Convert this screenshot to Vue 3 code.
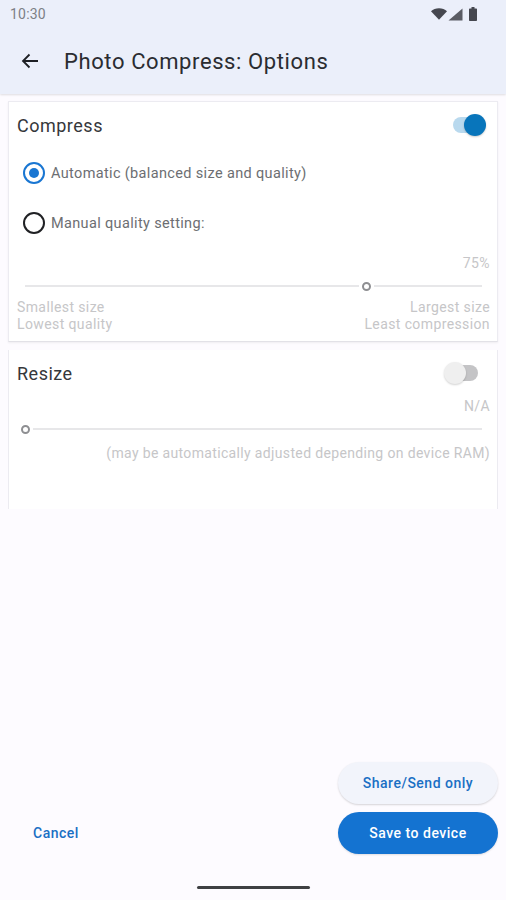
<template>
  <div class="screen">
    <div class="topbar">
      <div class="status">
        <span class="time">10:30</span>
        <div class="status-icons">
          <svg width="16" height="12" viewBox="0 0 16 12"><path d="M0 3.200C2 1.300 4.800 0.200 8 0.200s6 1.100 8 3L8 11.800z" fill="#45474f" /></svg>
          <svg width="15" height="13" viewBox="0 0 15 13"><path d="M14.500 0.500V12.500H0.500z" fill="#5a5c64" /></svg>
          <svg width="8" height="14" viewBox="0 0 8 14"><path d="M2.500 0h3v1.400h1.500c.6 0 1 .4 1 1V13c0 .6-.4 1-1 1H1c-.6 0-1-.4-1-1V2.400c0-.6.4-1 1-1h1.500z" fill="#45474f" /></svg>
        </div>
      </div>
      <div class="toolbar">
        <svg class="back" width="20" height="20" viewBox="0 0 20 20"><path d="M18 10H3M9.500 3.500 3 10l6.500 6.500" fill="none" stroke="#1d1f24" stroke-width="1.800" /></svg>
        <h1>Photo Compress: Options</h1>
      </div>
    </div>

    <section class="card first">
      <div class="card-head">
        <h2>Compress</h2>
        <div class="switch on"><span class="track"></span><span class="knob"></span></div>
      </div>
      <div class="radio-row first-radio">
        <span class="radio checked"><span class="dot"></span></span>
        <span>Automatic (balanced size and quality)</span>
      </div>
      <div class="radio-row second-radio">
        <span class="radio"></span>
        <span>Manual quality setting:</span>
      </div>
      <div class="value pct">{{ quality }}%</div>
      <div class="slider first-slider">
        <span class="line" :style="{ flexGrow: thumbPos }"></span>
        <span class="thumb"></span>
        <span class="line" :style="{ flexGrow: 100 - thumbPos }"></span>
      </div>
      <div class="legend">
        <div>Smallest size<br />Lowest quality</div>
        <div class="right">Largest size<br />Least compression</div>
      </div>
    </section>

    <section class="card second">
      <div class="card-head">
        <h2>Resize</h2>
        <div class="switch off"><span class="track"></span><span class="knob"></span></div>
      </div>
      <div class="value na">N/A</div>
      <div class="slider start">
        <span class="thumb"></span>
        <span class="line grow"></span>
      </div>
      <div class="note">(may be automatically adjusted depending on device RAM)</div>
    </section>

    <div class="actions">
      <button class="text-btn">Cancel</button>
      <div class="action-stack">
        <button class="pill light">Share/Send only</button>
        <button class="pill solid">Save to device</button>
      </div>
    </div>
    <div class="home-wrap"><span class="home"></span></div>
  </div>
</template>

<script setup>
const quality = 75
const thumbPos = 75.5
</script>

<style>
html,
body {
  margin: 0;
  background: #fdfbff;
}
</style>

<style scoped>
.screen {
  width: 506px;
  height: 900px;
  display: flex;
  flex-direction: column;
  background: #fdfbff;
  font-family: Roboto, "Liberation Sans", sans-serif;
  overflow: hidden;
}

.topbar {
  height: 94px;
  background: #ebeffa;
  box-shadow: 0 1px 2px rgba(0, 0, 0, 0.12);
}

.status {
  height: 28px;
  padding: 0 29px 0 10px;
  display: flex;
  justify-content: space-between;
  align-items: center;
}

.time {
  font-size: 14px;
  letter-spacing: 0.2px;
  color: #7d8086;
}

.status-icons {
  display: flex;
  align-items: center;
  gap: 1px;
}

.status-icons svg:last-child {
  margin-left: 5px;
}

.toolbar {
  height: 66px;
  padding-left: 20px;
  display: flex;
  align-items: center;
  gap: 24px;
}

.back {
  flex: none;
}

h1 {
  margin: 0;
  font-size: 22px;
  font-weight: 400;
  letter-spacing: 0.6px;
  color: #2a2c31;
}

.card {
  margin: 0 8px;
  padding: 0 7px 0 8px;
  background: #fff;
  border: 1px solid #ecebf1;
  box-sizing: border-box;
}

.first {
  margin-top: 7px;
  height: 241px;
  border-bottom-color: #e2e1e7;
  box-shadow: 0 1px 2px rgba(0, 0, 0, 0.06);
}

.second {
  margin-top: 8px;
  height: 159px;
  border-top: none;
  border-bottom: none;
}

.card-head {
  display: flex;
  justify-content: space-between;
  align-items: center;
  height: 46px;
}

h2 {
  margin: 0;
  font-size: 18px;
  font-weight: 400;
  letter-spacing: 0.5px;
  color: #35373b;
}

.switch {
  position: relative;
  width: 34px;
  height: 22px;
}

.on {
  margin-right: 4px;
}

.off {
  width: 35px;
  margin-right: 11px;
}

.track {
  position: absolute;
  left: 1px;
  right: 1px;
  top: 3px;
  height: 16px;
  border-radius: 8px;
}

.on .track {
  background: #b9d9ee;
}

.off .track {
  background: #c4c4c6;
}

.knob {
  position: absolute;
  top: 0;
  width: 22px;
  height: 22px;
  border-radius: 50%;
}

.on .knob {
  right: 0;
  background: #0875bb;
  box-shadow: 0 1px 2px rgba(0, 0, 0, 0.2);
}

.off .knob {
  left: 0;
  background: #efefef;
  box-shadow: 0 1px 2px rgba(0, 0, 0, 0.18);
}

.radio-row {
  display: flex;
  align-items: center;
  gap: 6px;
  padding-left: 6px;
  font-size: 14.5px;
  letter-spacing: 0.35px;
  color: #6c6e72;
}

.first-radio {
  margin-top: 14px;
}

.second-radio {
  margin-top: 28px;
}

.radio {
  width: 22px;
  height: 22px;
  box-sizing: border-box;
  border: 2px solid #202124;
  border-radius: 50%;
  display: flex;
  align-items: center;
  justify-content: center;
  flex: none;
}

.radio.checked {
  border-color: #1976d2;
}

.dot {
  width: 10px;
  height: 10px;
  border-radius: 50%;
  background: #1976d2;
}

.value,
.legend,
.note {
  font-size: 14px;
  letter-spacing: 0.39px;
  color: #c6c6c8;
  line-height: 17px;
}

.value {
  text-align: right;
}

.pct {
  margin-top: 21px;
}

.na {
  margin-top: 2px;
}

.slider {
  display: flex;
  align-items: center;
  height: 10px;
  padding: 0 8px;
  margin-top: 9px;
}

.line {
  flex: 1 1 0;
  height: 2px;
  background: #e7e7e9;
}

.thumb {
  flex: none;
  width: 9px;
  height: 9px;
  box-sizing: border-box;
  border: 2px solid #8e8f92;
  border-radius: 50%;
  background: #fff;
  margin: 0 3px;
}

.start .thumb {
  margin-left: -4px;
}

.legend {
  display: flex;
  justify-content: space-between;
  margin-top: 8px;
}

.right,
.note {
  text-align: right;
}

.note {
  margin-top: 11px;
  white-space: nowrap;
  letter-spacing: 0.35px;
}

.actions {
  margin-top: auto;
  padding: 0 8px 0 33px;
  display: flex;
  justify-content: space-between;
  align-items: flex-end;
}

button {
  font-family: inherit;
  font-size: 14px;
  font-weight: 500;
  border: none;
  letter-spacing: 0.5px;
}

.text-btn {
  background: none;
  color: #1a6fc4;
  padding: 0;
  height: 42px;
}

.action-stack {
  display: flex;
  flex-direction: column;
  gap: 8px;
  width: 160px;
}

.pill {
  height: 42px;
  border-radius: 21px;
}

.light {
  background: #f2f4fb;
  color: #1a6fc4;
  box-shadow: 0 1px 2px rgba(0, 0, 0, 0.16);
}

.solid {
  background: #1473d1;
  color: #fff;
  box-shadow: 0 1px 2px rgba(0, 0, 0, 0.12);
}

.home-wrap {
  height: 46px;
  display: flex;
  justify-content: center;
  padding-top: 32px;
  box-sizing: border-box;
}

.home {
  width: 113px;
  height: 3px;
  border-radius: 2px;
  background: #3f4043;
}
</style>
